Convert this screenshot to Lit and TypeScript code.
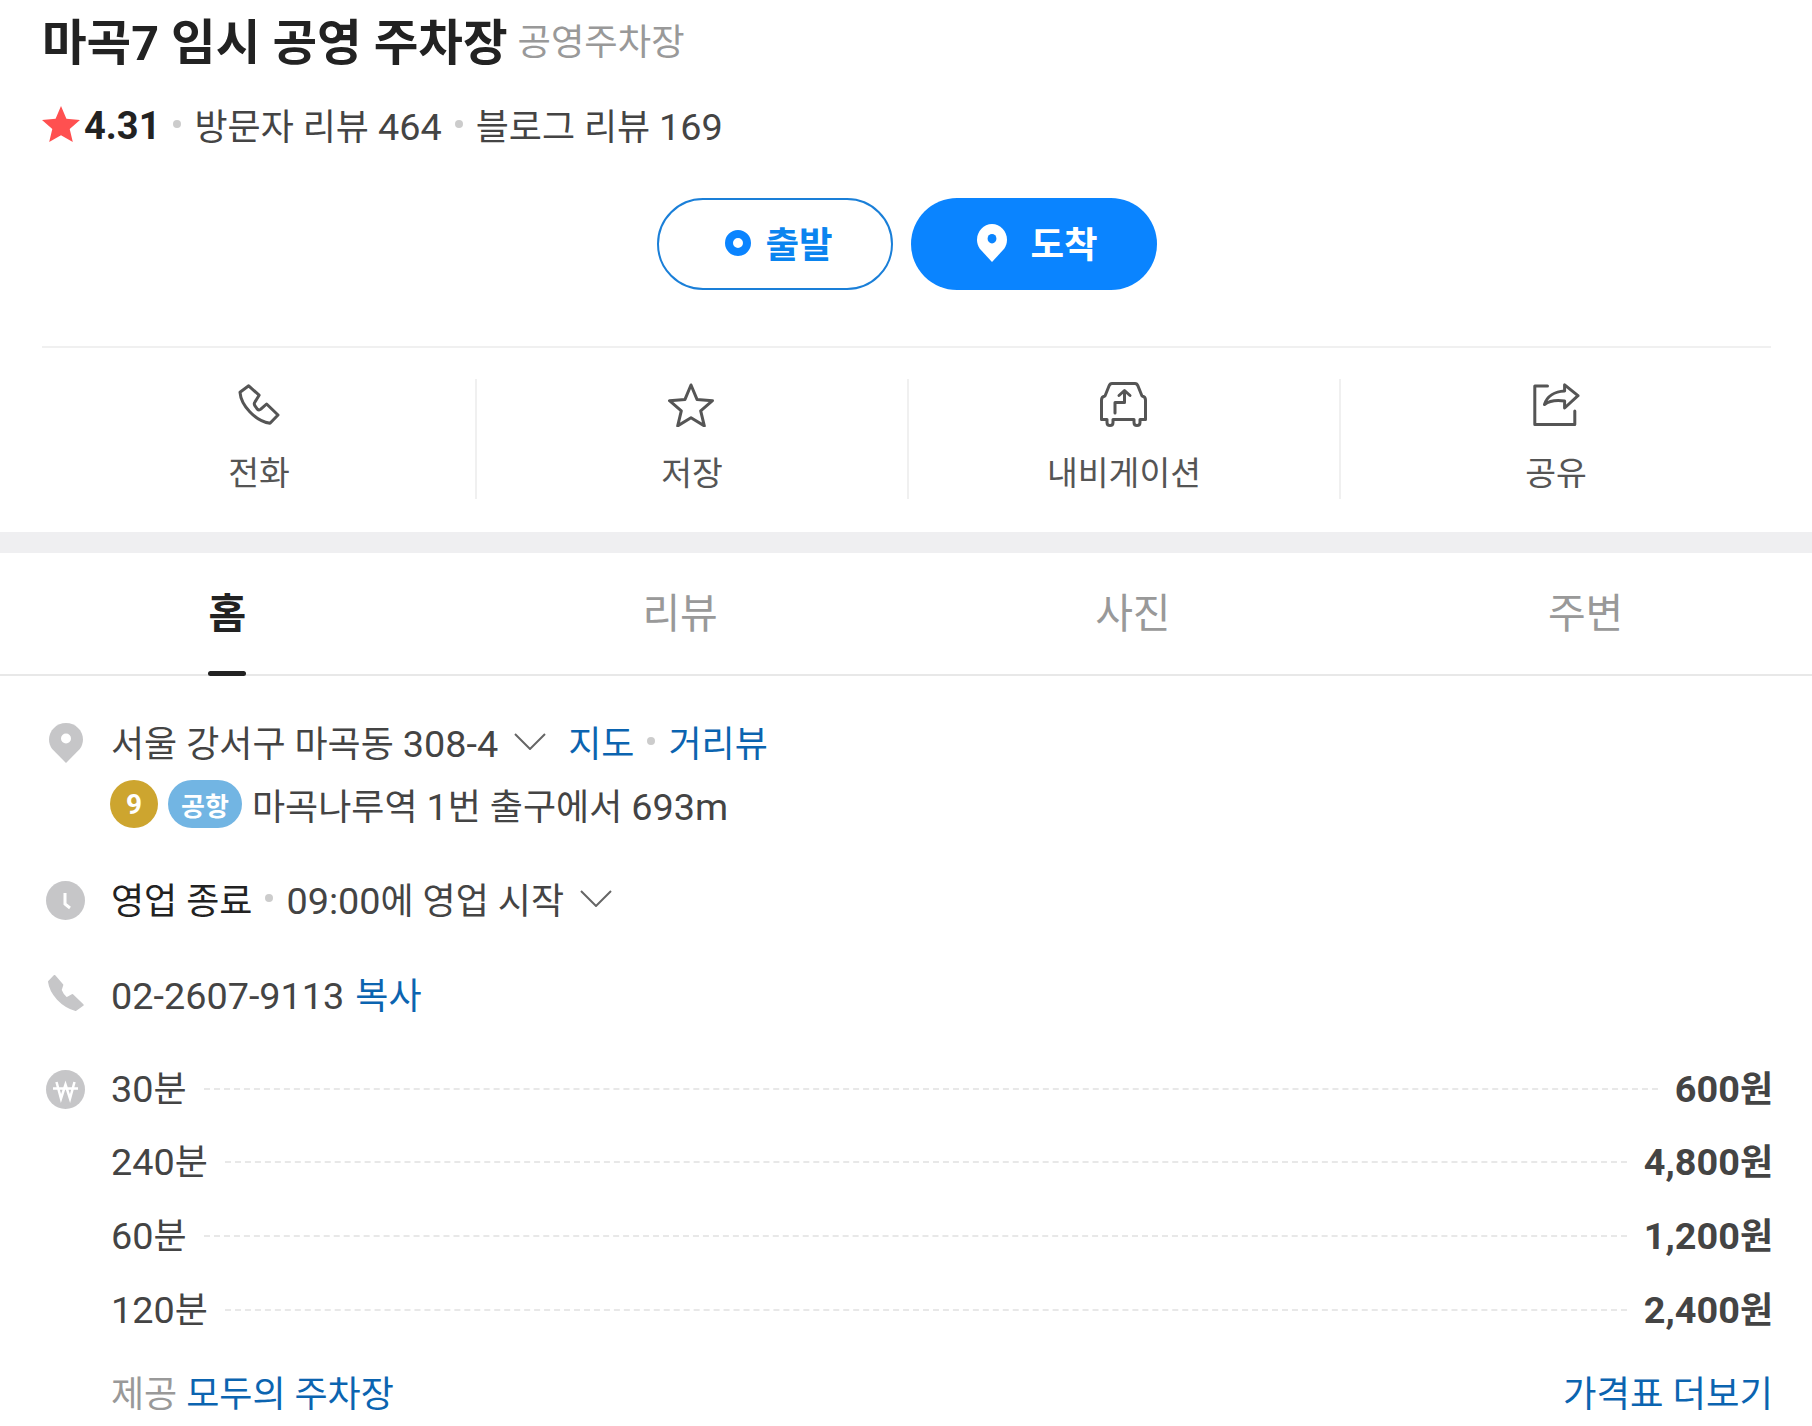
import { LitElement, html, css, svg } from "lit";
import { customElement } from "lit/decorators.js";

const pin = (fill: string, hole: string) => svg`<path fill=${fill} d="M17 0C7.600 0 0 7.500 0 16.600c0 3.600 1.200 6.800 3.200 9.500L17 40l13.800-13.900c2-2.700 3.200-5.900 3.200-9.500C34 7.500 26.400 0 17 0z"/><circle cx="17" cy="15.500" r="5" fill=${hole}/>`;

const chevron = html`<svg class="chev" width="32" height="17" viewBox="0 0 32 17"><path d="M1 1l15 15L31 1" fill="none" stroke="#666" stroke-width="2"/></svg>`;

@customElement("app-root")
export class AppRoot extends LitElement {
  static styles = css`
    :host { display: block; width: 1812px; height: 1426px; overflow: hidden; background: #fff; font-family: Roboto, "Noto Sans CJK KR", sans-serif; color: #444; font-size: 36px; }
    .n { font-size: 37.800px; }
    .head { padding: 0 41px 33px 42px; }
    .title { height: 77px; display: flex; align-items: center; gap: 10px; white-space: nowrap; }
    .title b { font-size: 48.500px; font-weight: 700; color: #222; }
    .title span { font-size: 36.300px; color: #999; }
    .rating { margin-top: 23px; height: 48px; display: flex; align-items: center; white-space: nowrap; }
    .rating svg { margin-right: 4px; }
    .rating b { font-weight: 700; color: #222; font-size: 38px; margin-top: 4px; }
    .dot { display: inline-block; width: 8px; height: 8px; border-radius: 50%; background: #ccc; margin: 0 13px; flex: none; }
    .rating .dot:first-of-type { margin-left: 13px; }
    .btns { margin: 50px -41px 0 -42px; padding-left: 1px; display: flex; justify-content: center; gap: 18px; }
    .btn { height: 92px; box-sizing: border-box; border-radius: 46px; display: flex; align-items: center; justify-content: center; font-size: 36.500px; font-weight: 700; padding-bottom: 3px; }
    .start { width: 236px; border: 2px solid #1a7fd8; color: #0a84ef; gap: 14px; background: #fff; padding-left: 9px; }
    .ring { width: 26px; height: 26px; box-sizing: border-box; border: 8px solid #0a84ff; border-radius: 50%; }
    .goal { width: 246px; background: #0a84ff; color: #fff; gap: 23px; padding-left: 8px; }
    .rule { height: 2px; background: #f0f0f0; margin-top: 56px; }
    .actions { margin: 31px 0 0 1px; display: grid; grid-template-columns: repeat(4, 1fr); height: 120px; }
    .action { display: flex; flex-direction: column; align-items: center; border-left: 2px solid #f0f0f0; color: #555; font-size: 33.500px; }
    .action:first-child { border-left: none; }
    .action .ic { height: 48px; margin-top: 2px; display: flex; align-items: center; justify-content: center; }
    .action .lb { margin-top: 22px; line-height: 46px; }
    .shiftl { margin-left: -2px; }
    .band { height: 21px; background: #efeff1; }
    .tabs { display: grid; grid-template-columns: repeat(4, 1fr); height: 121px; border-bottom: 2px solid #e8e8e8; padding-left: 1px; }
    .tab { position: relative; display: flex; align-items: center; justify-content: center; font-size: 41px; color: #999; padding-bottom: 7px; }
    .tab.on { color: #222; font-weight: 700; }
    .tab.on i { position: absolute; left: 50%; bottom: -2px; width: 38px; margin-left: -19px; height: 5px; border-radius: 3px; background: #222; }
    .body { padding: 33px 41px 0 42px; }
    .row { display: grid; grid-template-columns: 47px 1fr; column-gap: 22px; align-items: center; min-height: 64px; }
    .row .i { display: flex; justify-content: center; align-items: center; }
    .line { display: flex; align-items: center; height: 64px; white-space: nowrap; }
    .link { color: #0b64b0; }
    .chev { margin-left: 16px; flex: none; }
    .mapl { margin-left: 22px; }
    .copy { margin-left: 2px; }
    .badge { width: 48px; height: 48px; border-radius: 50%; background: #cda52f; color: #fff; font-size: 28px; font-weight: 700; display: flex; align-items: center; justify-content: center; margin: 0 10px 0 -1px; flex: none; }
    .pill { width: 74px; height: 48px; border-radius: 24px; background: #72b5e3; color: #fff; font-size: 26px; font-weight: 700; display: flex; align-items: center; justify-content: center; margin-right: 10px; flex: none; }
    .second { margin-top: -1px; }
    .mt { margin-top: 30px; }
    .mp { margin-top: 31px; }
    .pinic { margin-top: 4px; }
    .clockic { margin-top: 4px; }
    .wonic { margin-top: 8px; }
    .dark { color: #222; }
    .price { display: grid; grid-template-columns: 47px 1fr; column-gap: 22px; align-items: center; height: 73.600px; }
    .price .i { display: flex; justify-content: center; }
    .pline { display: flex; align-items: center; gap: 17px; white-space: nowrap; margin-right: -2px; }
    .pline u { flex: 1; border-top: 2px dashed #e8e8e8; text-decoration: none; margin-top: 6px; }
    .pline b { font-weight: 700; color: #444; }
    .prices { margin-top: 24px; }
    .foot { display: flex; justify-content: space-between; align-items: center; height: 64px; margin: 16px -2px 0 69px; white-space: nowrap; }
    .foot .g { color: #999; }
    .more { font-size: 36.400px; }
  `;

  render() {
    const prices: [string, string, string][] = [["30", "분", "600"], ["240", "분", "4,800"], ["60", "분", "1,200"], ["120", "분", "2,400"]];
    return html`
      <div class="head">
        <div class="title"><b>마곡7 임시 공영 주차장</b><span>공영주차장</span></div>
        <div class="rating">
          <svg width="38" height="36" viewBox="0 0 38 36"><path fill="#ff5050" d="M19 0l5.400 12.800 13.600 1.200-10.300 9 3.100 13L19 29.200 7.200 36l3.100-13L0 14l13.600-1.200z"/></svg>
          <b>4.31</b><i class="dot"></i><span>방문자 리뷰 <span class="n">464</span></span><i class="dot"></i><span>블로그 리뷰 <span class="n">169</span></span>
        </div>
        <div class="btns">
          <div class="btn start"><i class="ring"></i>출발</div>
          <div class="btn goal"><svg width="30" height="38" viewBox="0 0 34 40" preserveAspectRatio="none">${pin("#fff", "#0a84ff")}</svg>도착</div>
        </div>
        <div class="rule"></div>
        <div class="actions">
          <div class="action"><div class="ic"><svg width="42" height="42" viewBox="0 0 42 42" fill="none" stroke="#555" stroke-width="3" stroke-linejoin="round"><path d="M10.700 1.800 2 8.300C3 21 17 37 32 39.300l8-8.300L28.600 20l-5.800 5.200c-1.200 1-2.600.8-3.500-.1l-2.300-3.300c-.9-1.300-.9-2.800 0-3.900l4.100-6.700z"/></svg></div><div class="lb">전화</div></div>
          <div class="action"><div class="ic shiftl"><svg width="46" height="44" viewBox="0 0 46 44" fill="none" stroke="#555" stroke-width="3" stroke-linejoin="round"><path d="M23 2l6 14.400 15.500 1.300-11.800 10.100 3.600 15.100L23 34.800 9.700 42.900l3.600-15.100L1.500 17.700 17 16.400z"/></svg></div><div class="lb">저장</div></div>
          <div class="action"><div class="ic shiftl"><svg width="47" height="46" viewBox="0 0 47 46" fill="none" stroke="#555" stroke-width="3" stroke-linejoin="round" stroke-linecap="round"><path d="M1.500 37.500V18c0-2 1-3.500 3.500-4L9 4c.6-1.600 1.600-2.500 3-2.500h23c1.400 0 2.400.9 3 2.500l4 10c2.500.5 3.500 2 3.500 4v19.500H40v3c0 1.800-1.300 3-3 3s-3-1.200-3-3v-3H13v3c0 1.800-1.300 3-3 3s-3-1.200-3-3v-3z"/><path d="M15 31V20.500h9.500V9M19 13.500l5.500-5 5.500 5"/></svg></div><div class="lb">내비게이션</div></div>
          <div class="action"><div class="ic"><svg width="47" height="44" viewBox="0 0 47 44" fill="none" stroke="#555" stroke-width="3" stroke-linejoin="round" stroke-linecap="round"><path d="M14.500 3H1.800v38.500h40V28"/><path d="M11.500 21.500C14 13 22 8.500 31.600 8V1.800L45 12.700 31.600 25v-7c-7-1-15-.5-20.100 3.500z"/></svg></div><div class="lb">공유</div></div>
        </div>
      </div>
      <div class="band"></div>
      <div class="tabs">
        <div class="tab on">홈<i></i></div><div class="tab">리뷰</div><div class="tab">사진</div><div class="tab">주변</div>
      </div>
      <div class="body">
        <div class="row">
          <div class="i pinic"><svg width="34" height="40" viewBox="0 0 34 40">${pin("#c6c6c8", "#fff")}</svg></div>
          <div class="line"><span>서울 강서구 마곡동 <span class="n">308-4</span></span>${chevron}<span class="link mapl">지도</span><i class="dot"></i><span class="link">거리뷰</span></div>
        </div>
        <div class="row second">
          <div></div>
          <div class="line"><span class="badge">9</span><span class="pill">공항</span><span>마곡나루역 <span class="n">1</span>번 출구에서 <span class="n">693m</span></span></div>
        </div>
        <div class="row mt">
          <div class="i clockic"><svg width="39" height="39" viewBox="0 0 39 39"><circle cx="19.500" cy="19.500" r="19.500" fill="#c6c6c8"/><path d="M19 12v11l5 4" fill="none" stroke="#fff" stroke-width="3"/></svg></div>
          <div class="line"><span class="dark">영업 종료</span><i class="dot"></i><span><span class="n">09:00</span>에 영업 시작</span>${chevron}</div>
        </div>
        <div class="row mp">
          <div class="i"><svg width="36" height="36" viewBox="0 0 36 36"><path fill="#c6c6c8" stroke="#c6c6c8" stroke-width="2" stroke-linejoin="round" d="M6.500 1 1 6.700C2.500 19 14 31 27.700 35l7-5L24.300 20l-5.800 3.300c-2.500-2-4.500-5-5.800-8.300l1.600-5z"/></svg></div>
          <div class="line"><span><span class="n">02-2607-9113</span> <span class="link copy">복사</span></span></div>
        </div>
        <div class="prices">
          ${prices.map(([l, u, v], idx) => html`
            <div class="price">
              <div class="i wonic">${idx === 0 ? html`<svg width="39" height="39" viewBox="0 0 39 39"><circle cx="19.500" cy="19.500" r="19.500" fill="#c6c6c8"/><path d="M10.500 12l4.500 16.500 4.500-14 4.500 14 4.500-16.500M7 18.500h25" fill="none" stroke="#fff" stroke-width="2.500"/></svg>` : ""}</div>
              <div class="pline"><span><span class="n">${l}</span>${u}</span><u></u><b><span class="n">${v}</span>원</b></div>
            </div>`)}
        </div>
        <div class="foot"><span><span class="g">제공</span> <span class="link">모두의 주차장</span></span><span class="link more">가격표 더보기</span></div>
      </div>
    `;
  }
}
